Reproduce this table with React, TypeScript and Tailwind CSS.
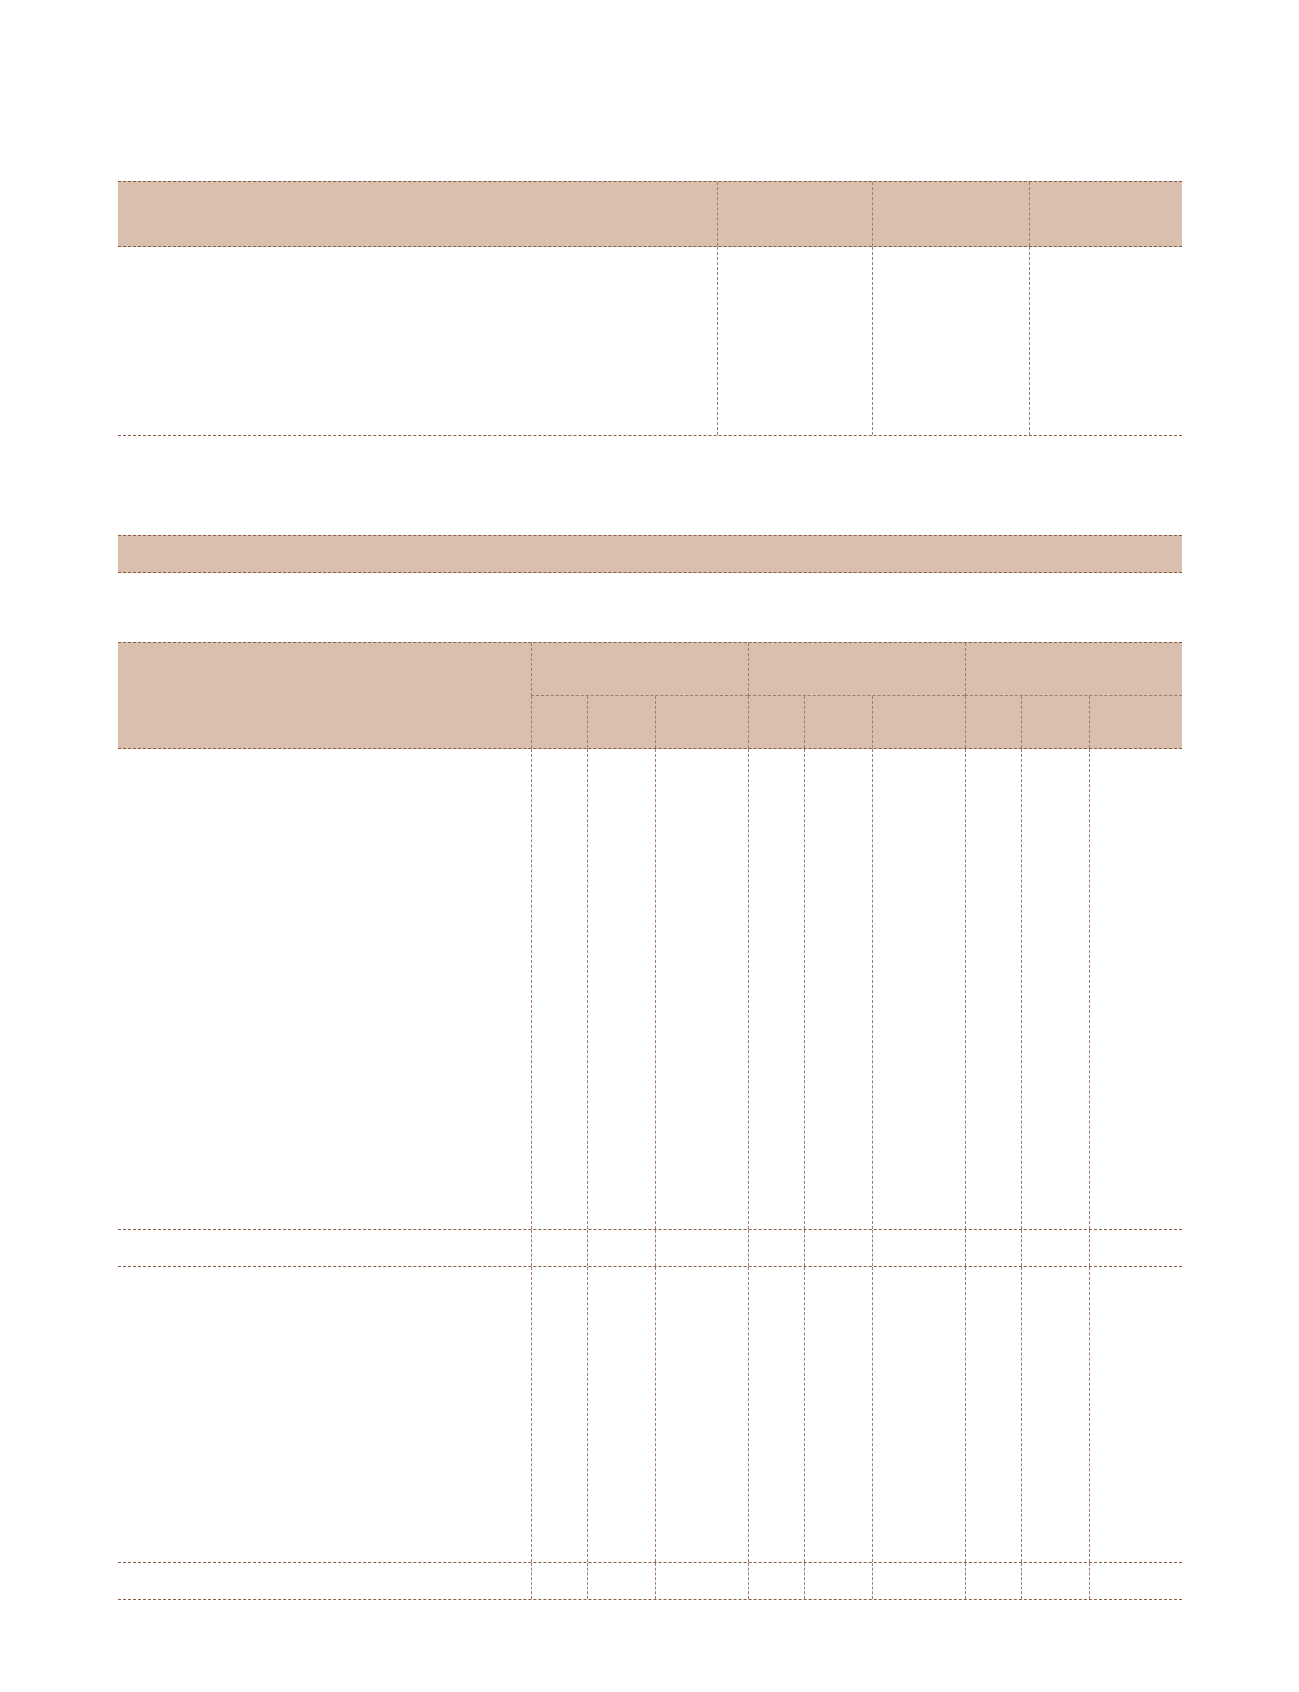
const line = 'border-dashed border-[#8b5b45]'
const vline = 'border-l border-dashed border-[#a07b69]'

const summaryCols = 'grid-cols-[599px_155px_157px_153px]'
const detailCols =
  'grid-cols-[413px_56px_68px_93px_56px_68px_93px_56px_68px_93px]'

function SummaryTable() {
  return (
    <div>
      {/* Header */}
      <div className={`grid ${summaryCols} h-[66px] border-y ${line} bg-[#d8bfae]`}>
        <div />
        <div className={vline} />
        <div className={vline} />
        <div className={vline} />
      </div>
      {/* Body */}
      <div className={`grid ${summaryCols} h-[189px] border-b ${line}`}>
        <div />
        <div className={vline} />
        <div className={vline} />
        <div className={vline} />
      </div>
    </div>
  )
}

function DetailRow({ height }: { height: string }) {
  return (
    <div className={`grid ${detailCols} ${height} border-b ${line}`}>
      <div />
      {Array.from({ length: 9 }).map((_, i) => (
        <div key={i} className={vline} />
      ))}
    </div>
  )
}

function DetailTable() {
  return (
    <div>
      {/* Header with grouped columns */}
      <div
        className={`grid ${detailCols} grid-rows-[53px_52px] border-y ${line} bg-[#d8bfae]`}
      >
        <div className="row-span-2" />
        {[0, 1, 2].map((g) => (
          <div key={g} className={`col-span-3 border-b ${line} ${vline}`} />
        ))}
        {Array.from({ length: 9 }).map((_, i) => (
          <div key={i} className={vline} />
        ))}
      </div>
      <DetailRow height="h-[481px]" />
      <DetailRow height="h-[37px]" />
      <DetailRow height="h-[296px]" />
      <DetailRow height="h-[37px]" />
    </div>
  )
}

export default function App() {
  return (
    <div className="min-h-[1692px] bg-white pt-[181px] font-['Liberation_Sans',sans-serif]">
      <div className="ml-[118px] w-[1064px]">
        <SummaryTable />

        {/* Section band */}
        <div className={`mt-[99px] h-[38px] border-y ${line} bg-[#d8bfae]`} />

        <div className="mt-[69px]">
          <DetailTable />
        </div>
      </div>
    </div>
  )
}
